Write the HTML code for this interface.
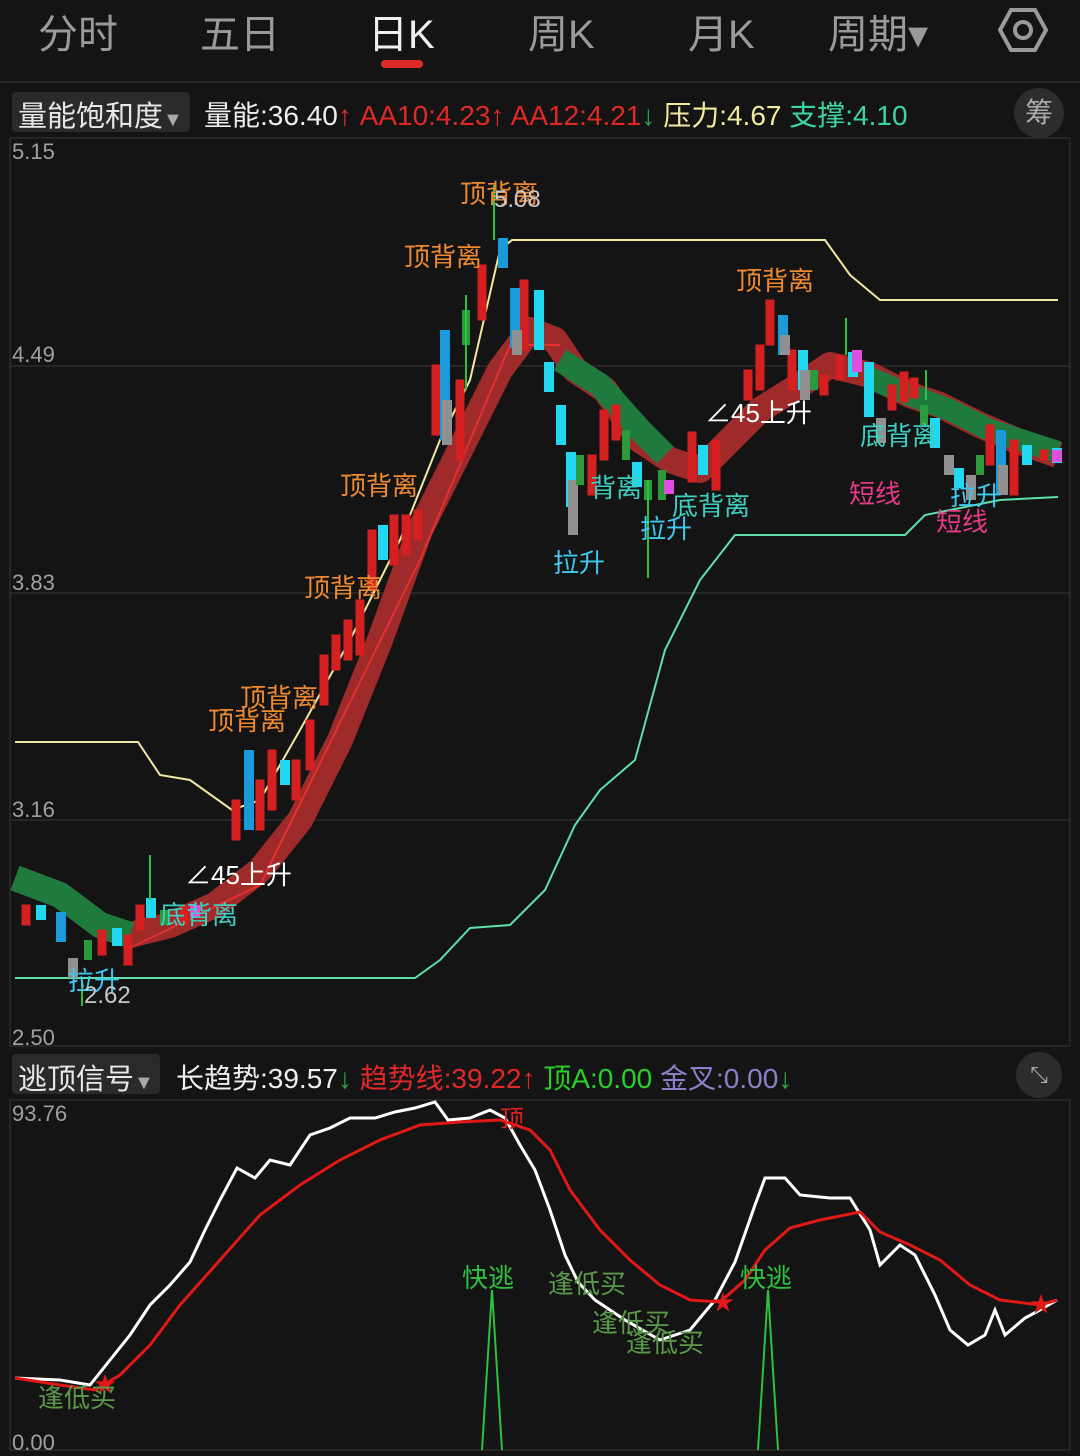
<!DOCTYPE html>
<html><head><meta charset="utf-8"><style>
body{margin:0;background:#141414;width:1080px;height:1456px;overflow:hidden;font-family:"Liberation Sans","Noto Sans CJK SC",sans-serif;}
.t{position:absolute;white-space:nowrap}
</style></head><body>
<div class="t" style="left:38px;top:2px;font-size:40px;color:#9a9a9a">分时</div>
<div class="t" style="left:200px;top:2px;font-size:40px;color:#9a9a9a">五日</div>
<div class="t" style="left:368px;top:2px;font-size:40px;color:#f0f0f0">日K</div>
<div style="position:absolute;left:381px;top:60px;width:42px;height:8px;border-radius:4px;background:#e02a2a"></div>
<div class="t" style="left:528px;top:2px;font-size:40px;color:#9a9a9a">周K</div>
<div class="t" style="left:688px;top:2px;font-size:40px;color:#9a9a9a">月K</div>
<div class="t" style="left:828px;top:2px;font-size:40px;color:#9a9a9a">周期▾</div>
<svg style="position:absolute;left:998px;top:6px" width="50" height="48"><polygon points="13,4 37,4 48,24 37,44 13,44 2,24" fill="none" stroke="#9a9a9a" stroke-width="4"/><circle cx="25" cy="24" r="8" fill="none" stroke="#9a9a9a" stroke-width="4"/></svg>
<div style="position:absolute;left:0;top:81px;width:1080px;height:2px;background:#262626"></div>
<div style="position:absolute;left:12px;top:92px;width:178px;height:40px;background:#2a2a2a;border-radius:4px"></div>
<div class="t" style="left:18px;top:93px;font-size:29px;color:#e8e8e8">量能饱和度<span style="font-size:20px;color:#aaa">▼</span></div>
<div class="t" style="left:204px;top:94px;font-size:28px;color:#eee">量能:36.40<span style="color:#e03030">↑</span><span style="color:#e02828"> AA10:4.23↑ AA12:4.21</span><span style="color:#2ea84a">↓</span> <span style="color:#f4e9a0">压力:4.67</span> <span style="color:#3dd6a0">支撑:4.10</span></div>
<div style="position:absolute;left:1014px;top:88px;width:50px;height:50px;border-radius:25px;background:#2c2c2c;color:#aaa;font-size:28px;text-align:center;line-height:50px">筹</div>
<svg style="position:absolute;left:0;top:0" width="1080" height="1456">
<g stroke="#2c2c2c" stroke-width="1.5" fill="none">
<rect x="10" y="138" width="1060" height="908"/>
<line x1="10" y1="366" x2="1070" y2="366"/><line x1="10" y1="593" x2="1070" y2="593"/><line x1="10" y1="820" x2="1070" y2="820"/>
<rect x="10" y="1100" width="1060" height="350"/>
</g>
<g font-size="22" fill="#a0a0a0"><text x="12" y="159">5.15</text><text x="12" y="362">4.49</text><text x="12" y="590">3.83</text><text x="12" y="817">3.16</text><text x="12" y="1045">2.50</text><text x="12" y="1121">93.76</text><text x="12" y="1450">0.00</text></g>
<!-- ribbon -->
<polyline points="15,878 60,895 100,925 130,935 170,925 215,905 260,870 300,820 340,740 380,640 420,530 460,450 500,370 530,330 555,340 575,370 605,390 640,440 670,460 700,470 730,440 760,410 800,385 830,365 870,375 910,395 940,405 980,425 1015,440 1058,455" fill="none" stroke="#9e2a2a" stroke-width="26" stroke-linejoin="round"/>
<polyline points="15,878 60,895 100,925 130,935" fill="none" stroke="#1f7a3e" stroke-width="26"/>
<polyline points="560,360 600,385 640,430 665,455" fill="none" stroke="#1f7a3e" stroke-width="24"/>
<polyline points="870,378 910,395 950,410 990,430 1058,452" fill="none" stroke="#1f7a3e" stroke-width="22"/>
<polyline points="130,948 260,885 420,560 510,345 560,345" fill="none" stroke="#e03030" stroke-width="2"/>
<!-- pressure -->
<polyline points="15,742 138,742 160,775 190,780 232,810 260,800 300,730 350,640 400,540 440,440 470,380 500,250 512,240 825,240 850,275 880,300 1058,300" fill="none" stroke="#f0e8a0" stroke-width="2"/>
<!-- support -->
<polyline points="15,978 415,978 440,960 470,928 510,925 545,890 575,825 600,790 635,760 665,650 700,580 735,535 905,535 925,515 1000,500 1058,497" fill="none" stroke="#5ee0a8" stroke-width="2"/>
<g stroke-width="2">
<g id="c"></g>
</g>
<g>
<!-- candles: x,top,height,color -->
<g fill="#d42020" stroke="#d42020">
<rect x="22" y="905" width="8" height="20"/><rect x="98" y="930" width="8" height="25"/><rect x="124" y="935" width="8" height="30"/><rect x="136" y="905" width="8" height="25"/><rect x="180" y="905" width="8" height="20"/><rect x="232" y="800" width="8" height="40"/><rect x="256" y="780" width="8" height="50"/><rect x="268" y="750" width="8" height="60"/><rect x="292" y="760" width="8" height="40"/><rect x="306" y="720" width="8" height="50"/><rect x="320" y="655" width="8" height="50"/><rect x="332" y="635" width="8" height="35"/><rect x="344" y="620" width="8" height="40"/><rect x="356" y="600" width="8" height="55"/><rect x="368" y="530" width="8" height="60"/><rect x="390" y="515" width="8" height="50"/><rect x="402" y="515" width="8" height="40"/><rect x="414" y="510" width="8" height="30"/><rect x="432" y="365" width="8" height="70"/><rect x="456" y="380" width="8" height="80"/><rect x="478" y="265" width="8" height="55"/><rect x="520" y="280" width="8" height="70"/><rect x="588" y="455" width="8" height="40"/><rect x="600" y="410" width="8" height="50"/><rect x="612" y="405" width="8" height="35"/><rect x="688" y="432" width="8" height="50"/><rect x="712" y="440" width="8" height="50"/><rect x="744" y="370" width="8" height="30"/><rect x="756" y="345" width="8" height="45"/><rect x="766" y="300" width="8" height="45"/><rect x="788" y="350" width="8" height="40"/><rect x="820" y="375" width="8" height="20"/><rect x="836" y="355" width="8" height="25"/><rect x="888" y="385" width="8" height="25"/><rect x="900" y="372" width="8" height="30"/><rect x="910" y="378" width="8" height="20"/><rect x="986" y="425" width="8" height="40"/><rect x="1010" y="440" width="8" height="55"/><rect x="1040" y="450" width="8" height="10"/>
</g>
<g fill="#1a9ad8"><rect x="56" y="912" width="10" height="30"/><rect x="244" y="750" width="10" height="80"/><rect x="440" y="330" width="10" height="110"/><rect x="498" y="238" width="10" height="30"/><rect x="510" y="288" width="10" height="60"/><rect x="778" y="315" width="10" height="40"/><rect x="996" y="430" width="10" height="65"/></g>
<g fill="#22d8f0"><rect x="36" y="905" width="10" height="15"/><rect x="112" y="928" width="10" height="18"/><rect x="146" y="898" width="10" height="20"/><rect x="280" y="760" width="10" height="25"/><rect x="378" y="525" width="10" height="35"/><rect x="534" y="290" width="10" height="60"/><rect x="544" y="362" width="10" height="30"/><rect x="556" y="405" width="10" height="40"/><rect x="566" y="452" width="10" height="55"/><rect x="632" y="462" width="10" height="25"/><rect x="698" y="445" width="10" height="30"/><rect x="798" y="350" width="10" height="40"/><rect x="848" y="352" width="10" height="25"/><rect x="864" y="362" width="10" height="55"/><rect x="930" y="418" width="10" height="30"/><rect x="954" y="468" width="10" height="20"/><rect x="1022" y="445" width="10" height="20"/><rect x="1052" y="448" width="10" height="15"/></g>
<g fill="#909090"><rect x="68" y="958" width="10" height="20"/><rect x="442" y="400" width="10" height="45"/><rect x="512" y="330" width="10" height="25"/><rect x="568" y="480" width="10" height="55"/><rect x="780" y="335" width="10" height="20"/><rect x="800" y="370" width="10" height="30"/><rect x="876" y="418" width="10" height="25"/><rect x="944" y="455" width="10" height="20"/><rect x="966" y="475" width="10" height="25"/><rect x="998" y="465" width="10" height="30"/></g>
<g fill="#2a9a3a"><rect x="84" y="940" width="8" height="20"/><rect x="160" y="910" width="8" height="15"/><rect x="462" y="310" width="8" height="35"/><rect x="576" y="455" width="8" height="30"/><rect x="622" y="430" width="8" height="30"/><rect x="644" y="480" width="8" height="20"/><rect x="658" y="470" width="8" height="30"/><rect x="810" y="370" width="8" height="20"/><rect x="920" y="405" width="8" height="20"/><rect x="976" y="455" width="8" height="20"/></g>
<g fill="#e050e0"><rect x="190" y="905" width="10" height="12"/><rect x="664" y="480" width="10" height="14"/><rect x="852" y="350" width="10" height="22"/><rect x="1052" y="450" width="10" height="12"/></g>
<g stroke="#2ec040" stroke-width="2"><line x1="150" y1="855" x2="150" y2="900"/><line x1="494" y1="185" x2="494" y2="240"/><line x1="648" y1="480" x2="648" y2="578"/><line x1="846" y1="318" x2="846" y2="355"/><line x1="82" y1="980" x2="82" y2="1006"/><line x1="466" y1="295" x2="466" y2="390"/><line x1="926" y1="370" x2="926" y2="400"/></g>
</g>
<g font-size="26" fill="#f08a30">
<text x="460" y="203">顶背离</text><text x="404" y="266">顶背离</text><text x="736" y="290">顶背离</text><text x="340" y="495">顶背离</text><text x="304" y="597">顶背离</text><text x="240" y="707">顶背离</text><text x="208" y="730">顶背离</text>
</g>
<g font-size="26" fill="#3cd0c0"><text x="160" y="924">底背离</text><text x="590" y="497">背离</text><text x="672" y="515">底背离</text><text x="860" y="445">底背离</text></g>
<g font-size="26" fill="#40c8f0"><text x="553" y="572">拉升</text><text x="640" y="538">拉升</text><text x="68" y="990">拉升</text><text x="950" y="505">拉升</text></g>
<g font-size="26" fill="#e83a8a"><text x="849" y="503">短线</text><text x="936" y="531">短线</text></g>
<g font-size="26" fill="#ffffff"><text x="185" y="884">∠45上升</text><text x="705" y="422">∠45上升</text></g>
<text x="84" y="1003" font-size="24" fill="#c8c8c8">2.62</text><text x="494" y="207" font-size="24" fill="#c8c8c8">5.08</text>
<!-- lower panel -->
<polyline points="15,1378 60,1380 90,1385 110,1360 130,1335 150,1305 170,1285 190,1262 205,1230 220,1200 237,1168 255,1178 270,1160 290,1165 310,1135 330,1128 350,1118 375,1118 395,1112 415,1108 435,1102 448,1120 470,1118 490,1110 505,1118 520,1145 535,1170 550,1210 565,1255 578,1282 595,1300 625,1320 660,1340 690,1330 715,1300 735,1262 755,1205 765,1178 785,1178 800,1195 830,1198 850,1198 870,1230 880,1265 900,1245 915,1255 935,1295 950,1330 968,1345 985,1335 995,1310 1005,1335 1025,1318 1040,1310 1057,1300" fill="none" stroke="#ffffff" stroke-width="3"/>
<polyline points="15,1378 60,1385 95,1390 120,1375 150,1345 180,1305 220,1260 260,1215 300,1185 340,1160 380,1140 420,1125 460,1122 500,1120 530,1130 550,1150 570,1190 600,1230 630,1260 660,1285 690,1300 720,1302 745,1280 765,1250 790,1228 820,1220 860,1212 880,1232 910,1245 940,1260 970,1285 1000,1300 1040,1305 1057,1300" fill="none" stroke="#e01818" stroke-width="3"/>
<g fill="none" stroke="#2ec040" stroke-width="2"><polyline points="482,1450 492,1290 502,1450"/><polyline points="758,1450 768,1290 778,1450"/></g>
<g fill="#e01818"><text x="1030" y="1312" font-size="22">★</text><text x="712" y="1310" font-size="22">★</text><text x="94" y="1392" font-size="22">★</text></g>
<text x="500" y="1127" font-size="24" fill="#e02020">顶</text>
<g font-size="26" fill="#2ec040"><text x="462" y="1287">快逃</text><text x="740" y="1287">快逃</text></g>
<g font-size="26" fill="#5a9a4a"><text x="548" y="1293">逢低买</text><text x="592" y="1332">逢低买</text><text x="626" y="1352">逢低买</text><text x="38" y="1407">逢低买</text></g>
</svg>
<div style="position:absolute;left:12px;top:1054px;width:148px;height:40px;background:#2a2a2a;border-radius:4px"></div>
<div class="t" style="left:18px;top:1056px;font-size:29px;color:#e8e8e8">逃顶信号<span style="font-size:20px;color:#aaa">▼</span></div>
<div class="t" style="left:176px;top:1057px;font-size:28px;color:#eee">长趋势:39.57<span style="color:#2ea84a">↓</span> <span style="color:#e02828">趋势线:39.22↑</span> <span style="color:#2ad02a">顶A:0.00</span> <span style="color:#8a80c8">金叉:0.00</span><span style="color:#2ea84a">↓</span></div>
<div style="position:absolute;left:1016px;top:1052px;width:46px;height:46px;border-radius:23px;background:#2c2c2c;color:#aaa;font-size:22px;text-align:center;line-height:46px">⤡</div>
</body></html>
